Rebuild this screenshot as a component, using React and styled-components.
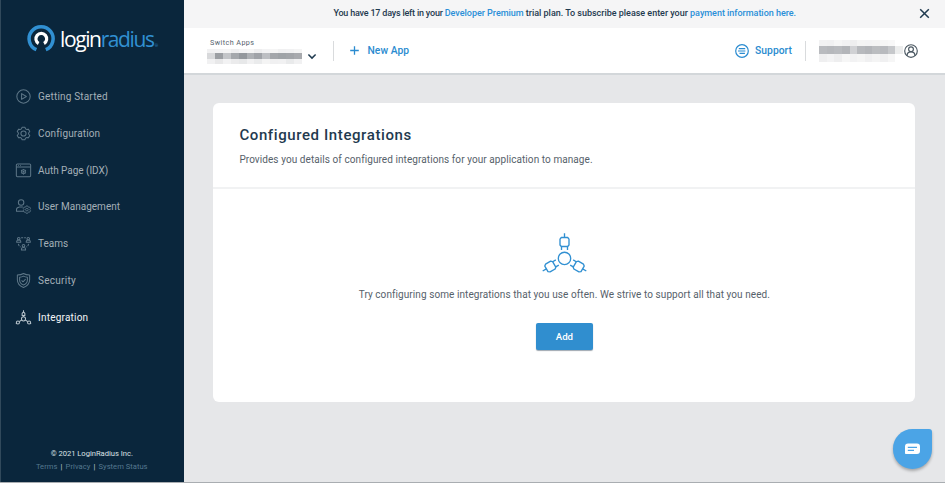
import React from 'react';
import styled, { createGlobalStyle } from 'styled-components';

const Global = createGlobalStyle`
  * { box-sizing: border-box; }
  body { margin: 0; overflow: hidden; font-family: Roboto, "Liberation Sans", sans-serif; color: #1f3a4f; }
  svg { display: block; fill: none; flex: none; overflow: visible; }
  h1, p { margin: 0; }
`;

const Page = styled.div`
  display: grid;
  grid-template-columns: 184px 1fr;
  width: 945px;
  height: 483px;
  background: #e6e7e9;
  border-bottom: 1px solid #a9adb1;
`;

const Sidebar = styled.aside`
  display: flex;
  flex-direction: column;
  min-height: 0;
  background: #0a263c;
  border-left: 1px solid #31495b;
`;

const Brand = styled.div`
  display: flex;
  height: 78.3px;
  padding: 25px 0 0 26px;
  gap: 5px;
`;

const Wordmark = styled.div`
  display: flex;
  align-items: baseline;
  height: 28px;
  font: 400 21px/28px "Open Sans", sans-serif;
  letter-spacing: -1.38px;
  color: #fff;
`;

const WordAccent = styled.span`
  color: #3190d2;
`;

const Registered = styled.span`
  margin-left: 1px;
  font-size: 4px;
  letter-spacing: 0;
  color: #3190d2;
`;

const Nav = styled.nav`
  display: flex;
  flex-direction: column;
`;

const NavItem = styled.a`
  display: flex;
  align-items: center;
  gap: 7px;
  height: 36.75px;
  padding-left: 15px;
  font-size: 10px;
  white-space: nowrap;
  letter-spacing: ${(p) => p.$track}px;
  color: ${(p) => (p.$active ? '#f2f5f7' : '#a4afb7')};
  svg { stroke: ${(p) => (p.$active ? '#b8c4cc' : '#5d7687')}; }
`;

const SideFooter = styled.footer`
  display: flex;
  flex-direction: column;
  align-items: center;
  margin-top: auto;
  padding: 0 1.5px 9px 0;
  font-size: 7.6px;
  line-height: 13px;
  white-space: nowrap;
  color: #dbe1e5;
  letter-spacing: -0.02px;
`;

const FooterLinks = styled.div`
  display: flex;
  gap: 3.2px;
  color: #c5ccd1;
`;

const FooterLink = styled.a`
  color: #55788f;
  letter-spacing: 0.02px;
`;

const Main = styled.main`
  display: flex;
  flex-direction: column;
  min-width: 0;
`;

const Banner = styled.div`
  display: grid;
  grid-template-columns: 1fr auto 1fr;
  align-items: center;
  height: 28px;
  padding: 0 16.5px 2px 0;
  background: #f5f5f6;
  font-size: 9px;
  font-weight: 500;
  white-space: pre;
  svg { justify-self: end; stroke: #1f3a4f; }
`;

const BannerText = styled.p`
  grid-column: 2;
  margin-left: 17px;
  line-height: 12px;
  letter-spacing: -0.02px;
`;

const BannerLead = styled.span`
  letter-spacing: -0.2px;
`;

const BannerLink = styled.a`
  color: #2a8fd8;
`;

const Header = styled.header`
  display: flex;
  align-items: center;
  height: 47px;
  padding: 0 27px 0 23px;
  background: #fff;
  border-bottom: 2px solid #d3d7da;
`;

const Switcher = styled.div`
  display: flex;
  flex-direction: column;
  gap: 2px;
  width: 110px;
`;

const SwitcherLabel = styled.span`
  padding-left: 3px;
  font-size: 7.2px;
  line-height: 9px;
  letter-spacing: 0.43px;
  color: #56636d;
`;

const SwitcherValue = styled.div`
  display: flex;
  align-items: center;
  gap: 5.5px;
  svg { stroke: #1f3a4f; }
`;

const Divider = styled.div`
  width: 1px;
  height: 20px;
  margin: 0 ${(p) => p.$after}px 0 ${(p) => p.$before}px;
  background: #d9dbdd;
`;

const Redacted = styled.div`
  display: grid;
  grid-template-columns: repeat(${(p) => p.$columns}, 1fr);
  grid-template-rows: ${(p) => p.$rows};
  width: ${(p) => p.$width}px;
`;

const Pixel = styled.i`
  background: ${(p) => p.$tone};
`;

const HeaderAction = styled.a`
  display: flex;
  align-items: center;
  gap: ${(p) => p.$gap}px;
  margin-left: ${(p) => (p.$push ? 'auto' : '0')};
  font-size: 10.3px;
  font-weight: 500;
  letter-spacing: 0.03px;
  white-space: nowrap;
  color: #2a8bd0;
  svg { stroke: #2a8bd0; }
`;

const Account = styled.div`
  display: flex;
  align-items: center;
  gap: 1px;
  svg { stroke: #4b5862; }
`;

const Card = styled.section`
  display: flex;
  flex-direction: column;
  width: 702px;
  height: 299px;
  margin: 28px 0 0 29.4px;
  background: #fff;
  border-radius: 6px;
`;

const CardHead = styled.div`
  height: 86px;
  padding: 20px 26px 0;
  border-bottom: 2px solid #f1f2f3;
`;

const Title = styled.h1`
  font-size: 15px;
  font-weight: 500;
  line-height: 24px;
  letter-spacing: 0.6px;
`;

const Text = styled.p`
  font-size: 10px;
  line-height: 14px;
  letter-spacing: ${(p) => p.$track}px;
  white-space: nowrap;
  color: #56616a;
`;

const Description = styled(Text)`
  margin-top: 6px;
`;

const EmptyState = styled.div`
  display: flex;
  flex-direction: column;
  align-items: center;
  padding-top: 44px;
`;

const EmptyText = styled(Text)`
  margin-top: 15px;
`;

const AddButton = styled.button`
  width: 57.500px;
  height: 26.500px;
  margin-top: 21px;
  padding: 0;
  border: 0;
  border-radius: 2px;
  background: #308ecf;
  box-shadow: 0 1px 1px rgba(40, 60, 80, 0.45);
  color: #fff;
  font: 500 9.700px Roboto, sans-serif;
`;

const ChatButton = styled.button`
  position: absolute;
  left: 892.500px;
  top: 429px;
  display: grid;
  place-items: center;
  width: 39.500px;
  height: 40px;
  padding: 0;
  border: 0;
  border-radius: 20px 3px 20px 20px;
  background: #4ba4e6;
  box-shadow: 0 2px 3px rgba(0, 0, 0, 0.28);
`;

function LogoMark() {
  return (
    <svg width="28" height="28" viewBox="0 0 28 28">
      <path d="M9.400 24.700A12 12 0 1 1 18.800 24.700" stroke="#3190d2" strokeWidth="3.500" />
      <path d="M11.600 18.500A5.400 5.400 0 1 1 17 18.500" stroke="#fff" strokeWidth="3.200" />
    </svg>
  );
}

const gear = 'M9 1.7 13 1.7 14 4.2 15.5 5 18.2 4.6 20.2 8.1 18.5 10.2V11.8L20.2 13.9 18.2 17.4 15.5 17 14 17.8 13 20.3H9L8 17.8 6.5 17 3.8 17.4 1.8 13.9 3.5 11.8V10.2L1.8 8.1 3.8 4.6 6.5 5 8 4.2Z';

const icons = {
  play: (
    <>
      <circle cx="11" cy="11" r="9.8" />
      <path d="M8.2 6.8v8.4l7-4.2Z" />
    </>
  ),
  gear: (
    <>
      <path d={gear} />
      <circle cx="11" cy="11" r="3.8" />
    </>
  ),
  page: (
    <>
      <rect x="0.5" y="1.5" width="21" height="18.5" rx="1.5" />
      <path d="M.5 6h21M3 3.8h1m2 0h1" />
      <circle cx="11" cy="12.8" r="2.8" />
      <circle cx="11" cy="12.8" r=".7" />
      <path d="M11 8.7V10m0 5.6v1.3M7.4 10.7l1.2.7m4.8 2.8 1.2.7m0-4.2-1.2.7m-4.8 2.8-1.2.7" />
    </>
  ),
  user: (
    <>
      <circle cx="7.5" cy="5" r="4" />
      <path d="M11 18H.7v-2.3C.7 13 2.5 12 5 11.6h5" />
      <g transform="translate(9.6 9.2) scale(.58)" strokeWidth="2.1">
        <path d={gear} />
        <circle cx="11" cy="11" r="3.3" />
      </g>
    </>
  ),
  teams: (
    <>
      <circle cx="4" cy="4" r="1.9" />
      <circle cx="18" cy="4" r="1.9" />
      <circle cx="11" cy="14.4" r="1.9" />
      <path d="M1 9.3V8c0-1.3 1-2 3-2s3 .7 3 2v1.3ZM15 9.3V8c0-1.3 1-2 3-2s3 .7 3 2v1.3ZM8 20.5v-1.8c0-1.3 1-2 3-2s3 .7 3 2v1.8Z" />
      <path d="M7.5 2.6h7M3.5 11.5c.5 2.2 1.6 3.8 3.2 4.8m11.8-4.8c-.5 2.2-1.6 3.8-3.2 4.8" strokeDasharray="3 1.5" />
    </>
  ),
  shield: (
    <>
      <path d="M11 .8C13.8 2.5 16.8 3 20 3v7c0 5.8-3.5 9.2-9 11.4C5.5 19.2 2 15.8 2 10V3c3.2 0 6.2-.5 9-2.2Z" />
      <path d="M11 4.6c1.800 1 3.600 1.400 5.700 1.500v4.100c0 3.700-2.100 5.900-5.700 7.500-3.600-1.600-5.700-3.800-5.700-7.500V6.100C7.400 6 9.200 5.600 11 4.600Z" />
      <path d="m8.200 10.800 2.100 2.100 3.800-4" />
    </>
  ),
  nodes: (
    <>
      <circle cx="11" cy="13" r="3" />
      <circle cx="2.800" cy="18.300" r="2.300" />
      <circle cx="19.200" cy="18.300" r="2.300" />
      <path d="M11 .5v2.200M9 8V5L11 2.700 13 5v3ZM11 8v2M8.400 14.700l-3.700 2.400m8.900-2.400 3.700 2.400M-.2 20.300l1.500-1m20.900 1-1.500-1" />
    </>
  ),
};

function NavIcon({ name }) {
  return (
    <svg width="15" height="15" viewBox="0 0 22 22" strokeWidth="1.5" strokeLinejoin="round">
      {icons[name]}
    </svg>
  );
}

function Plug() {
  return (
    <>
      <path d="M22.500 .2v4.300M19.500 13.500v3.600M25.500 13.500v3.600" />
      <path d="M19.300 4.500h6.400l1.300 1.600v5.900l-1.300 1.500h-6.400l-1.300-1.500V6.100Z" />
    </>
  );
}

function IntegrationArt() {
  return (
    <svg width="45" height="40" viewBox="0 0 45 40" stroke="#3190d2" strokeWidth="1.350" strokeLinejoin="round">
      <circle cx="22.500" cy="25.400" r="6.200" />
      <Plug />
      <g transform="rotate(120 22.500 25.400)"><Plug /></g>
      <g transform="rotate(240 22.500 25.400)"><Plug /></g>
    </svg>
  );
}

const navItems = [
  ['play', 'Getting Started', 0.18],
  ['gear', 'Configuration', 0.15],
  ['page', 'Auth Page (IDX)', -0.03],
  ['user', 'User Management', 0.02],
  ['teams', 'Teams', -0.02],
  ['shield', 'Security', 0.28],
  ['nodes', 'Integration', 0.21],
];

const appPixels = [
  '#f1f1f2', '#f2f2f3', '#f4f4f4', '#eeeeef', '#f3f3f4', '#f5f5f5', '#eeeeef', '#f3f3f4', '#f5f5f5', '#f0f0f1', '#f1f1f2', '#f4f4f4',
  '#d8d9db', '#9c9fa3', '#c3c5c8', '#a5a8ac', '#94989d', '#aeb1b5', '#a0a3a8', '#bdbfc3', '#a4a7ab', '#9fa3a7', '#a2a5a9', '#a8aaae',
  '#f1f1f2', '#e8e8e9', '#f2f2f3', '#ebebec', '#e7e8e9', '#f1f1f2', '#eaebec', '#f4f4f4', '#f0f0f1', '#f1f1f2', '#e9eaeb', '#f1f1f2',
];

const accountPixels = [
  '#f2f2f3', '#f1f1f2', '#f6f6f6', '#f2f2f3', '#eeeeef', '#f4f4f4', '#f3f3f4', '#f4f4f4', '#f6f6f6', '#f8f8f8', '#fff',
  '#b9bbbf', '#b6b8bc', '#b9bbbf', '#b3b5b9', '#d0d1d4', '#b7b9bd', '#b3b5b9', '#bbbdc0', '#b8babe', '#c6c8cb', '#eceded',
  '#efeff0', '#f3f3f4', '#eeeeef', '#f6f6f6', '#f2f2f3', '#f5f5f5', '#f0f0f1', '#f4f4f4', '#f0f0f1', '#f6f6f6', '#fff',
];

export default function App() {
  return (
    <>
      <Global />
      <Page>
        <Sidebar>
          <Brand>
            <LogoMark />
            <Wordmark>login<WordAccent>radius</WordAccent><Registered>®</Registered></Wordmark>
          </Brand>
          <Nav>
            {navItems.map(([icon, label, track]) => (
              <NavItem key={label} $track={track} $active={icon === 'nodes'}>
                <NavIcon name={icon} />
                {label}
              </NavItem>
            ))}
          </Nav>
          <SideFooter>
            <span>© 2021 LoginRadius Inc.</span>
            <FooterLinks>
              <FooterLink>Terms</FooterLink>|<FooterLink>Privacy</FooterLink>|<FooterLink>System Status</FooterLink>
            </FooterLinks>
          </SideFooter>
        </Sidebar>
        <Main>
          <Banner>
            <BannerText>
              <BannerLead>You have 17 days left in your </BannerLead>
              <BannerLink>Developer Premium</BannerLink>
              {' trial plan. To subscribe please enter your '}
              <BannerLink>payment information here.</BannerLink>
            </BannerText>
            <svg width="9" height="9" viewBox="0 0 9 9" strokeWidth="1.5"><path d="m.2.2 8.600 8.600m0-8.600L.2 8.800" /></svg>
          </Banner>
          <Header>
            <Switcher>
              <SwitcherLabel>Switch Apps</SwitcherLabel>
              <SwitcherValue>
                <Redacted $columns={12} $rows="4px 6px 5px" $width={95}>
                  {appPixels.map((tone, i) => <Pixel key={i} $tone={tone} />)}
                </Redacted>
                <svg width="8" height="5" viewBox="0 0 8 5" strokeWidth="1.5"><path d="m.4.5 3.600 3.600L7.600.5" /></svg>
              </SwitcherValue>
            </Switcher>
            <Divider $before={16} $after={16} />
            <HeaderAction $gap={8.5}>
              <svg width="9" height="9" viewBox="0 0 9 9" strokeWidth="1.300"><path d="M4.500.2v8.600M.2 4.500h8.600" /></svg>
              New App
            </HeaderAction>
            <HeaderAction $gap={6} $push>
              <svg width="14" height="14" viewBox="0 0 14 14" strokeWidth="1.200">
                <circle cx="7" cy="7" r="6.300" />
                <path d="M3.800 4.700h6.400M3 7h7.400M4.500 9.300h5.400" />
              </svg>
              Support
            </HeaderAction>
            <Divider $before={13} $after={13} />
            <Account>
              <Redacted $columns={11} $rows="6px 8px 8px" $width={84}>
                {accountPixels.map((tone, i) => <Pixel key={i} $tone={tone} />)}
              </Redacted>
              <svg width="14" height="14" viewBox="0 0 14 14" strokeWidth="1.150">
                <circle cx="7" cy="7" r="6.300" />
                <circle cx="7" cy="5.300" r="2.400" />
                <path d="M3.200 11.700V11c0-1.900 1.300-3.100 3.800-3.100s3.800 1.200 3.800 3.100v.7" />
              </svg>
            </Account>
          </Header>
          <Card>
            <CardHead>
              <Title>Configured Integrations</Title>
              <Description $track={0.075}>Provides you details of configured integrations for your application to manage.</Description>
            </CardHead>
            <EmptyState>
              <IntegrationArt />
              <EmptyText $track={0.075}>Try configuring some integrations that you use often. We strive to support all that you need.</EmptyText>
              <AddButton>Add</AddButton>
            </EmptyState>
          </Card>
        </Main>
        <ChatButton aria-label="Chat">
          <svg width="15" height="12" viewBox="0 0 15 12">
            <path d="M3 .5h9a3 3 0 0 1 3 3v4.500a3 3 0 0 1-3 3H.8A.8.8 0 0 1 0 10.200V3.500a3 3 0 0 1 3-3Z" fill="#fff" />
            <path d="M2.800 4.400h9.200M2.800 7.400h6.200" stroke="#4ba4e6" strokeWidth="1.200" />
          </svg>
        </ChatButton>
      </Page>
    </>
  );
}
